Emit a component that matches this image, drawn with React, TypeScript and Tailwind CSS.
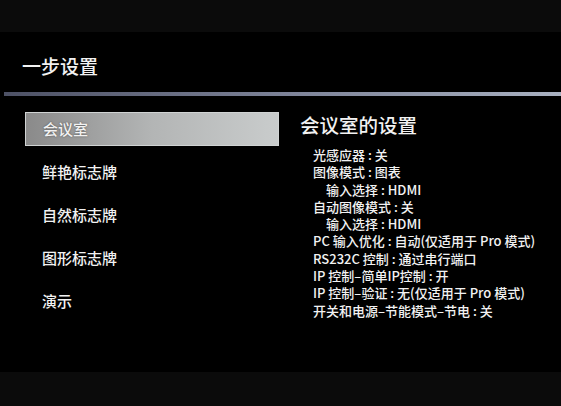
import React from "react";

const font = { fontFamily: '"Noto Sans CJK SC", "Noto Sans", sans-serif' };

const menu = ["会议室", "鲜艳标志牌", "自然标志牌", "图形标志牌", "演示"];

const lines: { t: string; indent?: boolean }[] = [
  { t: "光感应器 : 关" },
  { t: "图像模式 : 图表" },
  { t: "输入选择 : HDMI", indent: true },
  { t: "自动图像模式 : 关" },
  { t: "输入选择 : HDMI", indent: true },
  { t: "PC 输入优化 : 自动(仅适用于 Pro 模式)" },
  { t: "RS232C 控制 : 通过串行端口" },
  { t: "IP 控制–简单IP控制 : 开" },
  { t: "IP 控制–验证 : 无(仅适用于 Pro 模式)" },
  { t: "开关和电源–节能模式–节电 : 关" },
];

export default function App() {
  return (
    <div className="w-[561px] h-[406px] bg-black flex flex-col text-[#f2f2f2] overflow-hidden" style={font}>
      <div className="h-[32px] bg-[#0b0b0b] shrink-0" />
      <div className="flex-1 flex flex-col">
        <div className="pt-[20px] pl-[22px] h-[48px] text-[19px] leading-[28px] font-medium">一步设置</div>
        <div className="mt-[12px] ml-[4px] h-[4px] bg-gradient-to-r from-[#4d5165] via-[#7c8297] to-[#a9b1c1]" />
        <div className="mt-[16px] flex">
          <div className="ml-[25px] w-[254px] flex flex-col gap-[9px]">
            {menu.map((m, i) => (
              <div
                key={m}
                className={
                  i === 0
                    ? "h-[34px] pl-[17px] flex items-center text-[15px] font-medium border border-[#d0d3d3] bg-gradient-to-r from-[#8a8a8a] via-[#b3b5b5] to-[#c9cccc] [text-shadow:0_0_2px_rgba(0,0,0,0.5)]"
                    : "h-[34px] pl-[17px] flex items-center text-[15px] font-medium"
                }
              >
                {m}
              </div>
            ))}
          </div>
          <div className="ml-[21px] flex flex-col">
            <div className="h-[26px] leading-[26px] text-[19.5px] font-medium">会议室的设置</div>
            <div className="mt-[8px] pl-[13px] flex flex-col text-[13px] leading-[17.3px] font-medium">
              {lines.map((l, i) => (
                <div key={i} className={l.indent ? "pl-[13px] whitespace-nowrap" : "whitespace-nowrap"}>
                  {l.t}
                </div>
              ))}
            </div>
          </div>
        </div>
      </div>
      <div className="h-[34px] bg-[#0b0b0b] shrink-0" />
    </div>
  );
}
